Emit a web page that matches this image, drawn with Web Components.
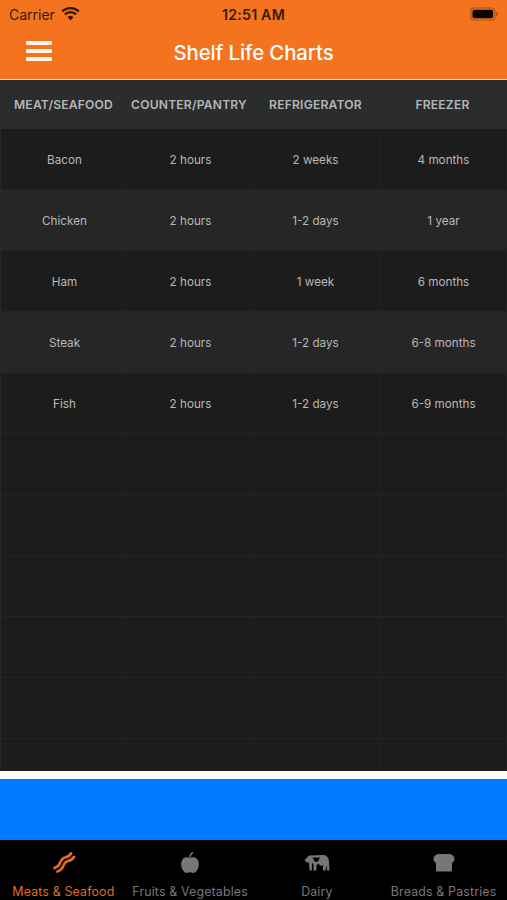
<!DOCTYPE html>
<html>
<head>
<meta charset="utf-8">
<title>Shelf Life Charts</title>
<style>
  html, body { margin: 0; padding: 0; background: #fff; }
  body {
    width: 507px;
    height: 900px;
    overflow: hidden;
    display: flex;
    flex-direction: column;
    font-family: Inter, "Liberation Sans", sans-serif;
  }
</style>
</head>
<body>
<app-header title="Shelf Life Charts"></app-header>
<shelf-table></shelf-table>
<ad-banner></ad-banner>
<tab-bar>
  <tab-item label="Meats &amp; Seafood" icon="bacon" active></tab-item>
  <tab-item label="Fruits &amp; Vegetables" icon="apple"></tab-item>
  <tab-item label="Dairy" icon="cow"></tab-item>
  <tab-item label="Breads &amp; Pastries" icon="bread"></tab-item>
</tab-bar>
<script>
class AppHeader extends HTMLElement {
  constructor () {
    super();
    const root = this.attachShadow({mode: 'open'});
    root.innerHTML = `
    <style>
      :host { display: block; height: 79px; background: #f4731f; border-bottom: 1px solid #f3d9c3; flex: none; }
      .status { height: 28px; display: grid; grid-template-columns: 1fr auto 1fr; align-items: center; padding: 0 9px; color: #3a1a05; font-size: 14px; }
      .left { display: flex; align-items: center; gap: 6px; }
      .time { font-weight: 600; font-size: 14.2px; letter-spacing: .2px; }
      .right { display: flex; justify-content: flex-end; }
      .nav { height: 51px; display: grid; grid-template-columns: 1fr auto 1fr; align-items: center; }
      .menu { display: flex; flex-direction: column; gap: 4px; width: 26px; margin: -6px 0 0 26px; }
      .menu i { display: block; height: 4px; background: #fff3e8; border-radius: 1px; }
      .title { color: #fff; font-size: 20.4px; font-weight: 500; letter-spacing: -.1px; padding-bottom: 3px; }
    </style>
    <div class="status">
      <div class="left">
        <span>Carrier</span>
        <svg width="19" height="14" viewBox="0 0 19 14"><path d="M9.5 13.4 6.6 10.2a4.2 4.2 0 0 1 5.8 0z" fill="#2e1404"/><path d="M3.9 7.4a8 8 0 0 1 11.2 0M1.2 4.5a12 12 0 0 1 16.6 0" fill="none" stroke="#2e1404" stroke-width="2.2"/></svg>
      </div>
      <span class="time">12:51 AM</span>
      <div class="right">
        <svg width="28" height="14" viewBox="0 0 28 14"><rect x=".8" y="1" width="24" height="12" rx="3.5" fill="none" stroke="#a8501a" stroke-width="1.2"/><rect x="2.5" y="2.7" width="20.6" height="8.6" rx="2" fill="#0a0400"/><path d="M26 5v4c1-.3 1.6-1 1.6-2S27 5.300 26 5z" fill="#a8501a"/></svg>
      </div>
    </div>
    <div class="nav">
      <div class="menu"><i></i><i></i><i></i></div>
      <span class="title"></span>
    </div>`;
    root.querySelector('.title').textContent = this.getAttribute('title');
  }
}

const rowTemplate = document.createElement('template');
rowTemplate.innerHTML = `
<style>
  :host { display: grid; grid-template-columns: 127px 127px 127px 126px; height: var(--row-h, 61px); flex: none; background: #1c1c1c; color: #b8b8b8; font-size: 11.7px; }
  :host([alt]) { background: #262626; }
  :host([head]) { background: #2b2c2d; color: #b6b6b6; font-size: 12.1px; font-weight: 600; letter-spacing: .2px; height: 49px; }
  :host([empty]) { background: #1c1c1c; }
  span { display: flex; align-items: center; justify-content: center; padding-top: 1px; border-right: 1px solid #212121; border-bottom: 1px solid #242424; box-sizing: border-box; white-space: nowrap; }
  span:nth-of-type(1) { border-left: 1px solid #272727; padding-left: 2px; }
  span:nth-of-type(2) { padding-left: 1px; }
  span:nth-of-type(3) { padding-right: 3px; }
  :host([head]) span { border-color: #2b2c2d; }
  :host([head]) span:nth-of-type(1) { padding-left: 0; }
  :host([head]) span:nth-of-type(2) { padding-left: 0; padding-right: 2px; }
  :host([head]) span:nth-of-type(4) { padding-right: 2px; }
  :host([alt]) span { border-color: #262626; }
</style>
<span></span><span></span><span></span><span></span>`;

class ShelfRow extends HTMLElement {
  constructor () {
    super();
    this.attachShadow({mode: 'open'}).appendChild(rowTemplate.content.cloneNode(true));
  }
  set cells (vals) {
    this.shadowRoot.querySelectorAll('span').forEach((s, i) => { s.textContent = vals[i] || ''; });
  }
}

const chart = [
  ['Bacon', '2 hours', '2 weeks', '4 months'],
  ['Chicken', '2 hours', '1-2 days', '1 year'],
  ['Ham', '2 hours', '1 week', '6 months'],
  ['Steak', '2 hours', '1-2 days', '6-8 months'],
  ['Fish', '2 hours', '1-2 days', '6-9 months']
];

class ShelfTable extends HTMLElement {
  constructor () {
    super();
    const root = this.attachShadow({mode: 'open'});
    root.innerHTML = `
    <style>
      :host { display: flex; flex-direction: column; height: 691px; flex: none; overflow: hidden; background: #1c1c1c; }
    </style>`;
    const add = (vals, attr, h) => {
      const row = document.createElement('shelf-row');
      if (attr) row.setAttribute(attr, '');
      if (h) row.style.setProperty('--row-h', h + 'px');
      row.cells = vals;
      root.appendChild(row);
    };
    add(['MEAT/SEAFOOD', 'COUNTER/PANTRY', 'REFRIGERATOR', 'FREEZER'], 'head');
    chart.forEach((vals, i) => add(vals, i % 2 ? 'alt' : ''));
    for (let i = 0; i < 5; i++) add([], 'empty');
    add([], 'empty', 32);
  }
}

class AdBanner extends HTMLElement {
  constructor () {
    super();
    this.attachShadow({mode: 'open'}).innerHTML = `
    <style>
      :host { display: block; flex: none; height: 61px; margin-top: 8px; background: #007aff; }
    </style>`;
  }
}

class TabBar extends HTMLElement {
  constructor () {
    super();
    this.attachShadow({mode: 'open'}).innerHTML = `
    <style>
      :host { display: grid; grid-template-columns: repeat(4, 1fr); flex: 1; background: #000; }
    </style>
    <slot></slot>`;
  }
}

const tabIcons = {
  bacon: `<svg width="26" height="24" viewBox="0 0 26 24" fill="none" stroke="currentColor" stroke-width="2.8" stroke-linecap="round"><path d="M4.500 17c3-1 4.500-2.500 5.500-5s3-5 5-5.500 4.500-1.500 6-4"/><path d="M7.500 20.500c3-1 4.500-2.500 5.500-5s3-5 5-5.500 4.500-1.500 6-4"/></svg>`,
  apple: `<svg width="20" height="24" viewBox="0 0 20 24"><path d="M10 7.200C8 5.700 1.800 5.500 1.200 12.500c-.4 5 3 9.500 5.600 9.500 1.400 0 2-.7 3.200-.7s1.800.7 3.200.7c2.600 0 6-4.500 5.600-9.500C18.200 5.500 12 5.700 10 7.200z" fill="currentColor"/><path d="M10 6.500c0-2.500 1-4.200 3-5" fill="none" stroke="currentColor" stroke-width="1.500"/></svg>`,
  cow: `<svg width="26" height="20" viewBox="0 0 26 20"><path d="M5 2.500 19 2c3.500 0 5.500 2.500 6 6l.4 9.500h-2.300l-.6-5-1 5h-2.600l.2-5.500c-1 1-2.500 1.200-3.500 0l-1.200-1.500-2 2v5H9.500v-6L8 9.500 7.800 17.500H5.500L5 9.500H2.500L.5 7z" fill="currentColor"/><path d="M8.500 4.500 11 9l3-.5 2-4z" fill="#000"/></svg>`,
  bread: `<svg width="22" height="20" viewBox="0 0 22 20"><path d="M7 1h8C19 1 21.500 3 21.500 6c0 2-1 3.300-2.500 4v7c0 1-.6 1.500-1.500 1.500h-13c-.9 0-1.500-.5-1.500-1.500V10C1.500 9.300.5 8 .5 6 .5 3 3 1 7 1z" fill="currentColor"/></svg>`
};

class TabItem extends HTMLElement {
  constructor () {
    super();
    const root = this.attachShadow({mode: 'open'});
    root.innerHTML = `
    <style>
      :host { display: flex; flex-direction: column; align-items: center; color: #777; font-size: 12.4px; letter-spacing: .15px; }
      :host([active]) { color: #dc6e28; }
      .icon { height: 24px; margin-top: 11px; display: flex; align-items: center; justify-content: center; }
      .label { margin-top: 9px; white-space: nowrap; }
    </style>
    <div class="icon"></div>
    <div class="label"></div>`;
    root.querySelector('.icon').innerHTML = tabIcons[this.getAttribute('icon')];
    root.querySelector('.label').textContent = this.getAttribute('label');
  }
}

customElements.define('app-header', AppHeader);
customElements.define('shelf-row', ShelfRow);
customElements.define('shelf-table', ShelfTable);
customElements.define('ad-banner', AdBanner);
customElements.define('tab-bar', TabBar);
customElements.define('tab-item', TabItem);
</script>
</body>
</html>
